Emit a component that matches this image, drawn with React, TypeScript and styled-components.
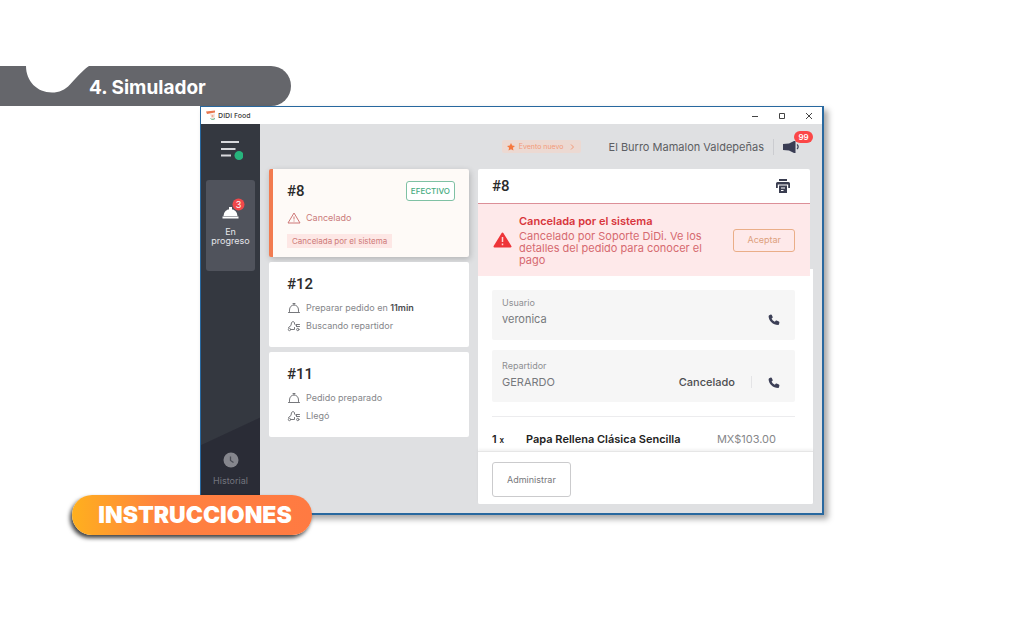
import React from "react";
import styled, { createGlobalStyle, css } from "styled-components";

const GlobalStyle = createGlobalStyle`
  * { box-sizing: border-box; }
  body {
    margin: 0;
    background: #fff;
    color: #333;
    font-family: Inter, "Open Sans", sans-serif;
    font-size: 10px;
    line-height: 12px;
  }
  h1, h2, h3, p, dl, dd { margin: 0; font-size: inherit; font-weight: inherit; }
  button, a { font: inherit; color: inherit; }
  button { padding: 0; border: 0; background: none; cursor: pointer; }
  a { text-decoration: none; }
`;

const Slide = styled.main`
  padding: 66px 0 80px;
`;

const Banner = styled.header`
  display: flex;
  align-items: flex-start;
  width: fit-content;
  height: 40px;
  padding: 0 85px 0 26px;
  border-radius: 0 20px 20px 0;
  background: #65666b;
  color: #fff;
`;

const BannerTitle = styled.h1`
  font-size: 19px;
  font-weight: 700;
  line-height: 44px;
`;

const Stage = styled.div`
  position: relative;
  margin: 0 200px;
`;

const AppWindow = styled.section`
  border: 1px solid #28689f;
  border-right-width: 2px;
  border-bottom-width: 2px;
  background: #dfe0e2;
  box-shadow: 4px 4px 6px rgba(0, 0, 0, 0.35);
`;

const TitleBar = styled.div`
  display: flex;
  align-items: center;
  justify-content: space-between;
  height: 17px;
  padding: 0 7px 0 5px;
  background: #fff;
`;

const AppName = styled.div`
  display: flex;
  align-items: center;
  gap: 2px;
  color: #444;
  font-family: "Open Sans", sans-serif;
  font-size: 7px;
  font-weight: 600;
`;

const WindowControls = styled.div`
  display: flex;
  gap: 15px;
`;

const ControlButton = styled.button`
  display: grid;
  place-items: center;
  width: 12px;
  height: 12px;
`;

const Body = styled.div`
  display: flex;
`;

const Sidebar = styled.nav`
  display: flex;
  flex: 0 0 59px;
  flex-direction: column;
  align-items: center;
  padding: 16px 5px 28px;
  background: linear-gradient(-25deg, #2a2c36 86px, #343840 87px);
  color: #e6e6ea;
`;

const MenuButton = styled.button`
  display: block;
  height: 22px;
`;

const NavLink = styled.a<{ $active?: boolean }>`
  display: flex;
  flex-direction: column;
  align-items: center;
  gap: 5px;
  width: 100%;
  font-size: 9px;
  line-height: 9px;
  text-align: center;
  ${(p) =>
    p.$active
      ? css`
          height: 91px;
          margin-top: 18px;
          padding-top: 18px;
          border-radius: 3px;
          background: #50535c;
        `
      : css`
          gap: 8px;
          margin-top: auto;
          color: #73757e;
        `}
`;

const Workspace = styled.div`
  flex: 1;
  min-width: 0;
  padding: 0 9px;
`;

const TopBar = styled.div`
  display: flex;
  align-items: center;
  justify-content: flex-end;
  height: 45px;
`;

const EventTag = styled.button`
  display: flex;
  align-items: center;
  gap: 4px;
  height: 13px;
  margin-right: 28px;
  padding: 0 5px;
  border-radius: 2px;
  background: #ecd9d2;
  color: #f39a78;
  font-size: 7px;
`;

const StoreName = styled.span`
  color: #5c5e63;
  font-size: 11px;
`;

const NewsButton = styled.button`
  position: relative;
  height: 16px;
  margin: 0 12px 0 9px;
  padding-left: 9px;
  border-left: 1px solid #cbccd0;
`;

const NewsBadge = styled.span`
  position: absolute;
  top: -8px;
  left: 20px;
  width: 19px;
  height: 12px;
  border-radius: 6px;
  background: #fb4747;
  color: #fff;
  font-size: 8px;
  font-weight: 600;
  line-height: 12px;
  text-align: center;
`;

const Columns = styled.div`
  display: grid;
  grid-template-columns: minmax(0, 200fr) minmax(0, 335fr);
  gap: 9px;
  padding-bottom: 9px;
`;

const OrderList = styled.div`
  display: flex;
  flex-direction: column;
  gap: 5px;
`;

const CardHead = styled.div`
  display: flex;
  align-items: center;
  justify-content: space-between;
  height: 18px;
  margin-bottom: 6px;
`;

const OrderCard = styled.article<{ $selected?: boolean }>`
  display: flex;
  flex-direction: column;
  height: ${(p) => (p.$selected ? "88px" : "85px")};
  padding: 13px 14px 0 18px;
  border-radius: 2px;
  background: #fff;
  ${(p) =>
    p.$selected &&
    css`
      padding-left: 14px;
      border-left: 4px solid #f27b50;
      background: #fefaf7;
      box-shadow: 1px 2px 6px rgba(0, 0, 0, 0.2);
      ${CardHead} { margin-bottom: 9px; }
    `}
`;

const OrderNumber = styled.h2`
  color: #2b2b2b;
  font-family: Roboto, sans-serif;
  font-size: 15px;
  font-weight: 500;
`;

const PaymentTag = styled.span`
  height: 20px;
  padding: 0 4px;
  border: 1px solid #7fc1a4;
  border-radius: 3px;
  background: #fff;
  color: #45ab80;
  font-size: 8px;
  font-weight: 500;
  line-height: 18px;
`;

const StatusLine = styled.p<{ $alert?: boolean }>`
  display: flex;
  align-items: center;
  gap: 5px;
  height: 18px;
  color: ${(p) => (p.$alert ? "#ca7b7b" : "#85868a")};
  font-size: 9px;
  white-space: pre;
  strong { margin-left: -5px; color: #4b4b4e; font-weight: 600; }
`;

const CancelTag = styled.span`
  align-self: flex-start;
  height: 14px;
  margin-top: 7px;
  padding: 0 5px;
  background: #fde7e5;
  color: #cd7a78;
  font-size: 8px;
  line-height: 14px;
`;

const Detail = styled.article`
  display: flex;
  flex-direction: column;
  border-radius: 2px;
  background: linear-gradient(#dfe0e2 100px, #fff 100px);
`;

const DetailHead = styled.div`
  display: flex;
  align-items: center;
  justify-content: space-between;
  height: 34px;
  margin-right: 3px;
  padding: 0 20px 0 14px;
  border-radius: 2px 2px 0 0;
  background: #fff;
`;

const Alert = styled.div`
  display: flex;
  align-items: center;
  height: 73px;
  margin-right: 3px;
  padding: 0 15px;
  border-top: 1px solid #dc8f98;
  background: #fee9ea;
`;

const AlertText = styled.div`
  flex: 1;
  margin-left: 7px;
  color: #d66a70;
  font-size: 11px;
  line-height: 12px;
`;

const AlertTitle = styled.h3`
  margin-bottom: 3px;
  color: #d8353c;
  font-weight: 600;
`;

const OutlineButton = styled.button<{ $wide?: boolean }>`
  height: ${(p) => (p.$wide ? "35px" : "23px")};
  padding: 0 ${(p) => (p.$wide ? "14px" : "13px")};
  border: 1px solid ${(p) => (p.$wide ? "#cbcbcd" : "#eaae88")};
  border-radius: 3px;
  color: ${(p) => (p.$wide ? "#77787b" : "#dda07d")};
  font-size: 9px;
`;

const DetailBody = styled.div`
  display: flex;
  flex-direction: column;
  padding: 14px 18px 0 14px;
`;

const Contact = styled.dl`
  display: flex;
  align-items: flex-start;
  height: 50px;
  padding: 7px 15px 0 10px;
  border-radius: 2px;
  background: #f6f6f6;
  & + & {
    height: 52px;
    margin-top: 10px;
    padding-top: 10px;
  }
`;

const ContactPerson = styled.div`
  flex: 1;
  dt { margin-bottom: 4px; color: #8e8f92; font-size: 9px; }
  dd { color: #77797d; font-size: 11px; }
`;

const ContactStatus = styled.dd`
  margin-top: 16px;
  padding-right: 16px;
  border-right: 1px solid #e4e4e6;
  color: #4c4d50;
  font-size: 11px;
  font-weight: 500;
`;

const CallButton = styled.button`
  display: grid;
  margin: 17px 0 0 16px;
`;

const ItemRow = styled.div`
  display: flex;
  align-items: center;
  height: 35px;
  margin-top: 14px;
  padding: 10px 19px 0 0;
  border-top: 1px solid #ececee;
  color: #222;
  font-size: 11px;
  font-weight: 600;
`;

const Quantity = styled.span`
  flex: 0 0 34px;
  small { font-size: 8px; }
`;

const Price = styled.span`
  margin-left: auto;
  color: #86878a;
  font-weight: 400;
`;

const DetailFoot = styled.div`
  padding: 10px 14px 7px;
  border-top: 1px solid #e6e6e6;
  border-radius: 0 0 2px 2px;
  background: #fff;
  box-shadow: 0 -2px 3px rgba(0, 0, 0, 0.05);
`;

const InstructionsButton = styled.button`
  position: absolute;
  bottom: -20px;
  left: -128px;
  width: 240px;
  height: 40px;
  border-radius: 20px;
  background: linear-gradient(90deg, #ffb01e, #ff8140 38%, #ff7a42);
  box-shadow: -2px 3px 4px rgba(0, 0, 0, 0.75);
  color: #fff;
  font-size: 23px;
  font-weight: 900;
  line-height: 40px;
  padding-left: 6px;
`;

const ClocheLine = () => (
  <svg width="14" height="12" viewBox="0 0 14 12" fill="none" stroke="#77787c" strokeWidth="1" strokeLinecap="round">
    <path d="M2.500 9.500V8C2.500 5 4.500 3 7 3s4.500 2 4.500 5v1.500M1.500 10.500h11M6 1.500h2M7 1.500V3" />
  </svg>
);

const CourierLine = () => (
  <svg width="14" height="12" viewBox="0 0 14 12" fill="none" stroke="#77787c" strokeWidth="1" strokeLinecap="round" strokeLinejoin="round">
    <circle cx="2.500" cy="9.500" r="1.200" />
    <circle cx="10.800" cy="9.500" r="1.200" />
    <path d="M1.500 7.500 4 5.500 4.500 2.500 6 1.500 7.500 2.500V4L9 5.500M4 9.500h3.500V7.500M9.500 4.500h3M9.500 6.500h3M9.500 4.500v2" />
  </svg>
);

const Phone = () => (
  <svg width="12" height="12" viewBox="0 0 12 12" fill="#3d4057">
    <path d="M1.200 1.300 2.800.6c.4-.2.8 0 1 .4l.9 1.900c.1.300 0 .7-.2.9l-.9.800c.6 1.500 1.700 2.500 3.200 3.200l.9-1c.2-.3.600-.4.900-.2l2.300 1c.4.2.6.5.5.9l-.4 1.800c-.1.400-.4.700-.8.700C5 11 .6 6.500.6 2.200c0-.4.200-.7.6-.9z" />
  </svg>
);

export default function App() {
  return (
    <Slide>
      <GlobalStyle />
      <Banner>
        <svg width="63" height="28" viewBox="0 0 63 28" fill="#fff">
          <path d="M0 0H63C58 3 54 8 44 18.500C39 24 33 26.500 26 26.500C11 26.500 0 15 0 0Z" />
        </svg>
        <BannerTitle>4. Simulador</BannerTitle>
      </Banner>

      <Stage>
        <AppWindow>
          <TitleBar>
            <AppName>
              <svg width="10" height="11" viewBox="0 0 10 11">
                <path d="M0 1.500 9 .500v2L1 4z" fill="#e8774e" />
                <path d="M4 4 9 3.500 8.500 9.500H6z" fill="#f6e3da" />
                <path d="M4.500 8.500c1.500 1.500 3 1 4.500 0" stroke="#59b58a" fill="none" />
                <circle cx="6.500" cy="6" r="1" fill="#f0a78c" />
              </svg>
              DiDi Food
            </AppName>
            <WindowControls>
              <ControlButton aria-label="Minimizar">
                <svg width="8" height="8" stroke="#444"><path d="M1 4.500h6" /></svg>
              </ControlButton>
              <ControlButton aria-label="Maximizar">
                <svg width="8" height="8" stroke="#444" fill="none"><path d="M1.500 1.500h5v5h-5z" /></svg>
              </ControlButton>
              <ControlButton aria-label="Cerrar">
                <svg width="8" height="8" stroke="#444"><path d="m1 1 6 6M7 1 1 7" /></svg>
              </ControlButton>
            </WindowControls>
          </TitleBar>

          <Body>
            <Sidebar>
              <MenuButton aria-label="Menú">
                <svg width="24" height="22" stroke="#d8d9dd" strokeWidth="2">
                  <path d="M2 2h18M2 9h14.500M2 15.500h10" />
                  <circle cx="20" cy="15.500" r="4.500" fill="#27b47c" stroke="none" />
                </svg>
              </MenuButton>
              <NavLink href="#progreso" $active>
                <svg width="28" height="24" viewBox="0 0 28 24">
                  <path d="M6.500 18a7 7 0 0 1 14 0zM5.500 18.500h16v2h-16zM12 9h3v3h-3z" fill="#fff" />
                  <circle cx="21.500" cy="6.500" r="6" fill="#f0484a" />
                  <text x="21.500" y="10" textAnchor="middle" fontSize="9" fill="#fff">3</text>
                </svg>
                <span>En<br />progreso</span>
              </NavLink>
              <NavLink href="#historial">
                <svg width="16" height="16" viewBox="0 0 16 16">
                  <circle cx="8" cy="8" r="7.500" fill="#85868d" />
                  <path d="M7.500 4.500V8.500l3 2" fill="none" stroke="#4a4c55" strokeWidth="1.300" />
                </svg>
                Historial
              </NavLink>
            </Sidebar>

            <Workspace>
              <TopBar>
                <EventTag>
                  <svg width="8" height="8" viewBox="0 0 10 10" fill="#f5793f">
                    <path d="m5 0 1.500 3.200 3.500.4-2.600 2.400.7 3.500L5 7.800 1.900 9.500l.7-3.500L0 3.600l3.500-.4z" />
                  </svg>
                  Evento nuevo
                  <svg width="8" height="8" fill="none" stroke="#f39a78"><path d="m3 1.500 2.500 2.500L3 6.500" /></svg>
                </EventTag>
                <StoreName>El Burro Mamalon Valdepeñas</StoreName>
                <NewsButton aria-label="Novedades">
                  <svg width="18" height="16" viewBox="0 0 18 16" fill="#3a3d54">
                    <path d="M0 5 6 4.500 11 2h1.500v12H11L6 11.500 0 11z" />
                    <path d="M14 5.500c1.500 1 1.500 3.500 0 4.500" fill="none" stroke="#3a3d54" strokeWidth="1.300" />
                  </svg>
                  <NewsBadge>99</NewsBadge>
                </NewsButton>
              </TopBar>

              <Columns>
                <OrderList>
                  <OrderCard $selected>
                    <CardHead>
                      <OrderNumber>#8</OrderNumber>
                      <PaymentTag>EFECTIVO</PaymentTag>
                    </CardHead>
                    <StatusLine $alert>
                      <svg width="14" height="12" viewBox="0 0 14 12" fill="none" stroke="#cd7676" strokeLinejoin="round">
                        <path d="M7 1 13 11H1zM7 4.500v3M7 8.500v1" />
                      </svg>
                      Cancelado
                    </StatusLine>
                    <CancelTag>Cancelada por el sistema</CancelTag>
                  </OrderCard>
                  <OrderCard>
                    <CardHead><OrderNumber>#12</OrderNumber></CardHead>
                    <StatusLine><ClocheLine />Preparar pedido en <strong>11min</strong></StatusLine>
                    <StatusLine><CourierLine />Buscando repartidor</StatusLine>
                  </OrderCard>
                  <OrderCard>
                    <CardHead><OrderNumber>#11</OrderNumber></CardHead>
                    <StatusLine><ClocheLine />Pedido preparado</StatusLine>
                    <StatusLine><CourierLine />Llegó</StatusLine>
                  </OrderCard>
                </OrderList>

                <Detail>
                  <DetailHead>
                    <OrderNumber>#8</OrderNumber>
                    <svg width="14" height="14" viewBox="0 0 14 14" fill="#3a3d50">
                      <path d="M3 0h8v2H3z" />
                      <path d="M1.500 3h11Q14 3 14 4.500V9h-1.800V5.500H1.800V9H0V4.500Q0 3 1.500 3z" />
                      <path d="M3 6.500h8V14H3z" />
                      <path d="M5 9h4M5 11.500h2.500" stroke="#fff" />
                    </svg>
                  </DetailHead>
                  <Alert role="alert">
                    <svg width="19" height="16" viewBox="0 0 19 16">
                      <path d="M9.500 1.500 17.500 14.500h-16z" fill="#ee3539" stroke="#ee3539" strokeWidth="2" strokeLinejoin="round" />
                      <path d="M9.500 5v5M9.500 11.500v1.700" stroke="#ffd6d6" strokeWidth="1.500" />
                    </svg>
                    <AlertText>
                      <AlertTitle>Cancelada por el sistema</AlertTitle>
                      <p>Cancelado por Soporte DiDi. Ve los<br />detalles del pedido para conocer el<br />pago</p>
                    </AlertText>
                    <OutlineButton>Aceptar</OutlineButton>
                  </Alert>
                  <DetailBody>
                    <Contact>
                      <ContactPerson><dt>Usuario</dt><dd>veronica</dd></ContactPerson>
                      <CallButton aria-label="Llamar a veronica"><Phone /></CallButton>
                    </Contact>
                    <Contact>
                      <ContactPerson><dt>Repartidor</dt><dd>GERARDO</dd></ContactPerson>
                      <ContactStatus>Cancelado</ContactStatus>
                      <CallButton aria-label="Llamar a GERARDO"><Phone /></CallButton>
                    </Contact>
                    <ItemRow>
                      <Quantity>1 <small>x</small></Quantity>
                      <span>Papa Rellena Clásica Sencilla</span>
                      <Price>MX$103.00</Price>
                    </ItemRow>
                  </DetailBody>
                  <DetailFoot>
                    <OutlineButton $wide>Administrar</OutlineButton>
                  </DetailFoot>
                </Detail>
              </Columns>
            </Workspace>
          </Body>
        </AppWindow>
        <InstructionsButton>INSTRUCCIONES</InstructionsButton>
      </Stage>
    </Slide>
  );
}
